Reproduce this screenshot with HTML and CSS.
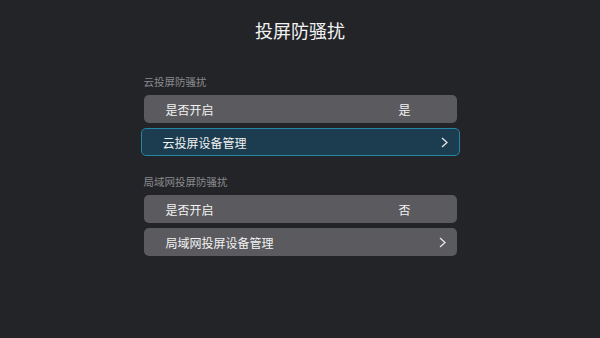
FILE: index.html
```html
<!DOCTYPE html>
<html lang="zh-CN">
<head>
  <meta charset="UTF-8">
  <meta name="viewport" content="width=device-width, initial-scale=1.0">
  <title>投屏防骚扰</title>
  <link rel="stylesheet" href="styles.css">
</head>
<body>
  <div class="screen">
    <h1 class="title">投屏防骚扰</h1>

    <div class="section">
      <div class="section-label">云投屏防骚扰</div>
      <div class="item">
        <span class="item-name">是否开启</span>
        <span class="item-value">是</span>
      </div>
      <div class="item focused">
        <span class="item-name">云投屏设备管理</span>
        <svg class="arrow" width="7" height="11" viewBox="0 0 7 11"><polyline points="1,1 6,5.5 1,10" fill="none" stroke="#e6e6e6" stroke-width="1.3"/></svg>
      </div>
    </div>

    <div class="section">
      <div class="section-label">局域网投屏防骚扰</div>
      <div class="item">
        <span class="item-name">是否开启</span>
        <span class="item-value">否</span>
      </div>
      <div class="item">
        <span class="item-name">局域网投屏设备管理</span>
        <svg class="arrow" width="7" height="11" viewBox="0 0 7 11"><polyline points="1,1 6,5.5 1,10" fill="none" stroke="#e6e6e6" stroke-width="1.3"/></svg>
      </div>
    </div>
  </div>
</body>
</html>
```

FILE: styles.css
```css
body {
  margin: 0;
  background: #232428;
  font-family: "Noto Sans CJK SC", "Noto Sans", sans-serif;
  color: #f0f0f0;
}

.screen {
  width: 313px;
  margin: 0 auto;
  padding-top: 18px;
}

.title {
  margin: 0 0 33px;
  font-size: 18px;
  font-weight: normal;
  line-height: 24px;
  text-align: center;
  color: #f2f2f2;
}

.section {
  display: flex;
  flex-direction: column;
  gap: 5px;
  margin-bottom: 19px;
}

.section-label {
  font-size: 10.5px;
  line-height: 14px;
  color: #8a8a8e;
  margin-bottom: 1px;
}

.item {
  display: flex;
  align-items: center;
  height: 28px;
  padding: 0 11px 0 22px;
  background: #5b5b5f;
  border-radius: 5px;
  font-size: 12px;
  color: #f2f2f2;
}

.item-name {
  flex: 1;
}

.item-value {
  margin-right: 35px;
}

.focused {
  margin: 0 -3px;
  padding-left: 21px;
  background: #1c3c50;
  border: 1px solid #2586a6;
  height: 26px;
}

.arrow {
  display: block;
}
```
